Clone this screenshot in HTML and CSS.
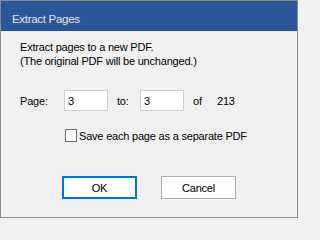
FILE: index.html
```html
<!DOCTYPE html>
<html>
<head>
<meta charset="utf-8">
<link rel="stylesheet" href="styles.css">
</head>
<body>
<div class="window">
  <div class="titlebar">Extract Pages</div>
  <div class="content">
    <p class="intro">Extract pages to a new PDF.<br>(The original PDF will be unchanged.)</p>
    <div class="range-row">
      <span class="lbl lbl-page">Page:</span>
      <input class="field" type="text" value="3">
      <span class="lbl lbl-to">to:</span>
      <input class="field" type="text" value="3">
      <span class="lbl lbl-of">of</span>
      <span class="lbl">213</span>
    </div>
    <label class="check-row"><span class="checkbox"></span><span class="check-text">Save each page as a separate PDF</span></label>
    <div class="buttons">
      <button class="btn btn-default">OK</button>
      <button class="btn">Cancel</button>
    </div>
  </div>
</div>
</body>
</html>
```
FILE: styles.css
```css
html, body {
  margin: 0;
  padding: 0;
  background: #f0f0f0;
}
.window {
  box-sizing: border-box;
  width: 298px;
  height: 218px;
  border: 1px solid #8a8a8a;
  background: #f0f0f0;
  font-family: "Liberation Sans", Arial, sans-serif;
  font-size: 11px;
  letter-spacing: -0.2px;
  color: #000;
  overflow: hidden;
}
.titlebar {
  height: 30px;
  box-sizing: border-box;
  background: #2b579a;
  color: #e6e6e6;
  padding: 11px 0 0 11px;
  line-height: 15px;
  font-size: 11.5px;
  letter-spacing: -0.3px;
}
.content {
  padding: 9px 0 0 19px;
}
.intro {
  margin: 0;
  line-height: 14px;
}
.range-row {
  display: flex;
  align-items: center;
  margin-top: 22px;
  height: 21px;
}
.lbl-page { width: 44px; }
.lbl-to { width: 23px; margin-left: 9px; }
.lbl-of { width: 24px; margin-left: 9px; }
.field {
  box-sizing: border-box;
  width: 44px;
  height: 21px;
  margin: 0;
  border: 1px solid #cfcfcf;
  background: #fff;
  padding: 0 0 0 3px;
  font: inherit;
  letter-spacing: inherit;
  color: #000;
  outline: none;
}
.check-row {
  display: flex;
  align-items: center;
  margin: 18px 0 0 45px;
  height: 13px;
}
.checkbox {
  box-sizing: border-box;
  width: 12px;
  height: 13px;
  border: 1px solid #6e6e6e;
  background: #fff;
  margin-right: 2px;
}
.buttons {
  display: flex;
  gap: 24px;
  margin: 34px 0 0 42px;
}
.btn {
  box-sizing: border-box;
  width: 75px;
  height: 23px;
  margin: 0;
  padding: 0;
  border: 1px solid #adadad;
  background: #fdfdfd;
  font: inherit;
  letter-spacing: inherit;
  color: #000;
}
.btn-default {
  border: 2px solid #0078d7;
}
```
